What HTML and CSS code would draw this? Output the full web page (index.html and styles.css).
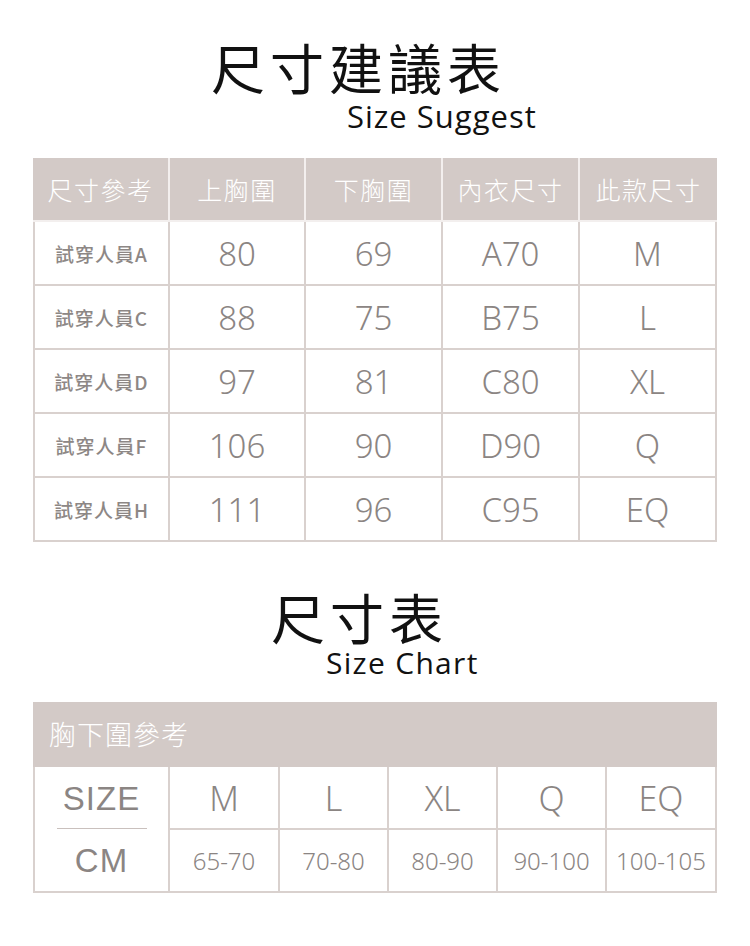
FILE: index.html
```html
<!DOCTYPE html>
<html lang="zh-Hant">
<head>
<meta charset="utf-8">
<title>尺寸建議表</title>
<link rel="stylesheet" href="styles.css">
</head>
<body>
<main class="page">
  <header class="title title-suggest">
    <h1 class="title-zh">尺寸建議表</h1>
    <p class="title-en">Size Suggest</p>
  </header>

  <section class="suggest">
    <div class="th">尺寸參考</div>
    <div class="th">上胸圍</div>
    <div class="th">下胸圍</div>
    <div class="th">內衣尺寸</div>
    <div class="th">此款尺寸</div>

    <div class="td label">試穿人員A</div><div class="td num">80</div><div class="td num">69</div><div class="td num">A70</div><div class="td num">M</div>
    <div class="td label">試穿人員C</div><div class="td num">88</div><div class="td num">75</div><div class="td num">B75</div><div class="td num">L</div>
    <div class="td label">試穿人員D</div><div class="td num">97</div><div class="td num">81</div><div class="td num">C80</div><div class="td num">XL</div>
    <div class="td label">試穿人員F</div><div class="td num">106</div><div class="td num">90</div><div class="td num">D90</div><div class="td num">Q</div>
    <div class="td label">試穿人員H</div><div class="td num">111</div><div class="td num">96</div><div class="td num">C95</div><div class="td num">EQ</div>
  </section>

  <header class="title title-chart">
    <h2 class="title-zh">尺寸表</h2>
    <p class="title-en">Size Chart</p>
  </header>

  <section class="chart">
    <div class="chart-head">胸下圍參考</div>
    <div class="chart-body">
      <div class="unit">
        <span class="unit-size">SIZE</span>
        <span class="unit-cm">CM</span>
      </div>
      <div class="cell size">M</div>
      <div class="cell size">L</div>
      <div class="cell size">XL</div>
      <div class="cell size">Q</div>
      <div class="cell size last">EQ</div>
      <div class="cell range">65-70</div>
      <div class="cell range">70-80</div>
      <div class="cell range">80-90</div>
      <div class="cell range">90-100</div>
      <div class="cell range last">100-105</div>
    </div>
  </section>
</main>
</body>
</html>
```

FILE: styles.css
```css
* { box-sizing: border-box; }
html, body { margin: 0; padding: 0; background: #fff; }
body {
  width: 750px;
  font-family: "Noto Sans CJK TC", "Noto Sans", sans-serif;
  color: #8b8583;
}
.page {
  display: flex;
  flex-direction: column;
  padding: 0 33px 0 33px;
}

/* titles */
.title { display: flex; flex-direction: column; color: #111; }
.title-zh {
  margin: 0;
  font-family: "Noto Sans CJK TC", sans-serif;
  font-weight: 400;
  font-size: 54px;
  line-height: 58px;
  letter-spacing: 5px;
}
.title-en {
  margin: 0;
  font-family: "Open Sans", "Noto Sans", sans-serif;
  font-size: 31px;
  line-height: 34px;
  font-weight: 400;
  letter-spacing: 1px;
}
.title-suggest { padding-top: 38px; margin-bottom: 25px; }
.title-suggest .title-zh { padding-left: 178px; }
.title-suggest .title-en { padding-left: 314px; margin-top: 3px; }
.title-chart { padding-top: 46px; margin-bottom: 22px; }
.title-chart .title-zh { padding-left: 238px; }
.title-chart .title-en { padding-left: 293px; font-size: 30px; letter-spacing: 1.3px; }

/* suggest table */
.suggest {
  display: grid;
  grid-template-columns: 137px 136px 137px 137px 137px;
  grid-auto-rows: 64px;
  width: 684px;
}
.th {
  display: flex;
  align-items: center;
  justify-content: center;
  background: #d3cac7;
  color: #fff;
  font-weight: 300;
  font-size: 25px;
  letter-spacing: 1.5px;
  border-right: 2px solid #f3efee;
  border-bottom: 2px solid #f3efee;
}
.th:nth-child(5) { border-right: none; }
.td {
  display: flex;
  align-items: center;
  justify-content: center;
  border-right: 2px solid #d9d1ce;
  border-bottom: 2px solid #d9d1ce;
}
.td.label {
  border-left: 2px solid #d9d1ce;
  font-size: 19px;
  font-weight: 500;
  color: #8d8785;
  letter-spacing: 1px;
}
.td.num {
  font-family: "Noto Sans", sans-serif;
  font-weight: 300;
  font-size: 33px;
}

/* size chart */
.chart { width: 684px; display: flex; flex-direction: column; }
.chart-head {
  height: 65px;
  background: #d3cac7;
  color: #fff;
  font-size: 27px;
  font-weight: 300;
  letter-spacing: 1px;
  display: flex;
  align-items: center;
  padding-left: 16px;
  padding-bottom: 2px;
}
.chart-body {
  display: grid;
  grid-template-columns: 137px 110px 109px 109px 109px 110px;
  grid-template-rows: 63px 63px;
}
.unit {
  grid-row: 1 / 3;
  display: flex;
  flex-direction: column;
  align-items: center;
  border-left: 2px solid #d9d1ce;
  border-right: 2px solid #d9d1ce;
  border-bottom: 2px solid #d9d1ce;
  font-family: "Liberation Sans", Arial, sans-serif;
  font-size: 33px;
  letter-spacing: 1px;
  color: #8b8583;
}
.unit-size, .unit-cm {
  height: 62px;
  display: flex;
  align-items: center;
  justify-content: center;
  width: 90px;
}
.unit-size { border-bottom: 1px solid #c9c0bd; padding-top: 2px; }
.unit-cm { padding-top: 2px; }
.cell {
  display: flex;
  align-items: center;
  justify-content: center;
  border-right: 2px solid #d9d1ce;
  border-bottom: 2px solid #d9d1ce;
}
.cell.size {
  font-family: "Noto Sans", sans-serif;
  font-weight: 300;
  font-size: 34px;
}
.cell.range {
  font-family: "Noto Sans", sans-serif;
  font-weight: 300;
  font-size: 24px;
}
```
